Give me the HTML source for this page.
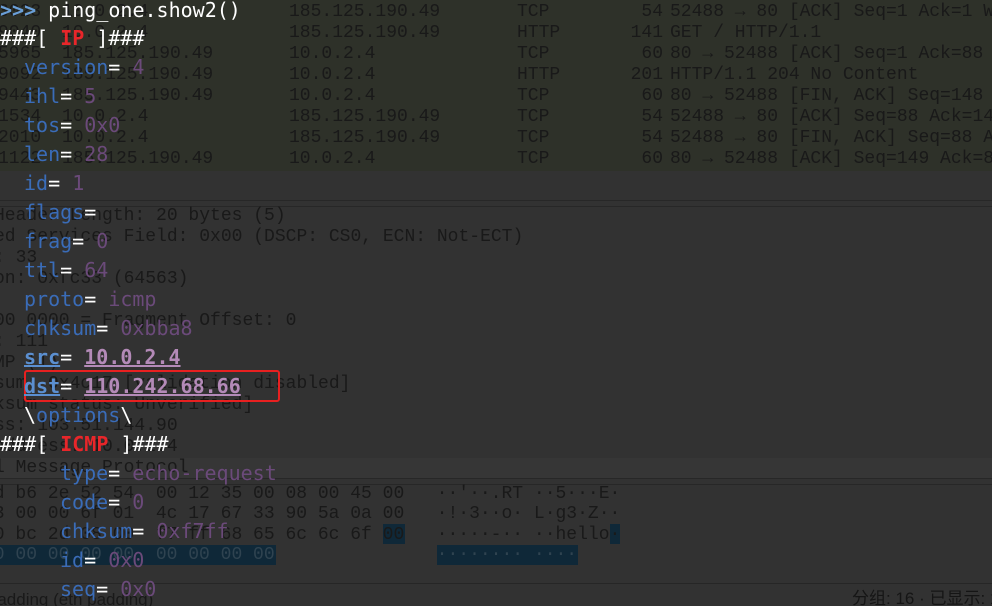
<!DOCTYPE html>
<html><head><meta charset="utf-8"><style>
html,body{margin:0;padding:0;width:992px;height:606px;overflow:hidden;background:#323232;position:relative}
.w{position:absolute;white-space:pre;font-family:"Liberation Mono",monospace;font-size:18px;color:#191919;line-height:21px}
.h{position:absolute;white-space:pre;font-family:"Liberation Mono",monospace;font-size:18px;color:#191919;line-height:20.3px}
.t{position:absolute;white-space:pre;font-family:"DejaVu Sans Mono",monospace;font-size:20px;line-height:24px;color:#fff}
.k{color:#3a6cb8}.v{color:#6b4a7a}.r{color:#e8262a;font-weight:bold}
.bk{color:#5b8fd0;font-weight:bold;text-decoration:underline}.bv{color:#b48ab8;font-weight:bold;text-decoration:underline}
</style></head><body>
<div style="position:absolute;left:0;top:0;width:992px;height:171px;background:#2e3129"></div>
<div style="position:absolute;left:0;top:200px;width:992px;height:1px;background:#272727"></div>
<div style="position:absolute;left:0;top:206px;width:992px;height:1px;background:#272727"></div>
<div style="position:absolute;left:0;top:458px;width:992px;height:21px;background:#363636"></div>
<div style="position:absolute;left:0;top:478px;width:992px;height:1px;background:#272727"></div>
<div style="position:absolute;left:0;top:484px;width:992px;height:1px;background:#272727"></div>
<div style="position:absolute;left:0;top:583px;width:992px;height:1px;background:#262626"></div>
<div style="position:absolute;left:0;top:545px;width:276px;height:20px;background:#0f2838"></div>
<div style="position:absolute;left:437px;top:545px;width:141px;height:20px;background:#0f2838"></div>
<div style="position:absolute;left:383px;top:524px;width:22px;height:20px;background:#0f2838"></div>
<div style="position:absolute;left:610px;top:524px;width:10px;height:20px;background:#0f2838"></div>

<div class="w" style="left:-2px;top:2px">3023
9040
5965
9092
9443
1534
2010
1122</div>
<div class="w" style="left:62px;top:2px">10.0.2.4
10.0.2.4
185.125.190.49
185.125.190.49
185.125.190.49
10.0.2.4
10.0.2.4
185.125.190.49</div>
<div class="w" style="left:289px;top:2px">185.125.190.49
185.125.190.49
10.0.2.4
10.0.2.4
10.0.2.4
185.125.190.49
185.125.190.49
10.0.2.4</div>
<div class="w" style="left:517px;top:2px">TCP
HTTP
TCP
HTTP
TCP
TCP
TCP
TCP</div>
<div class="w" style="left:600px;top:2px;width:63px;text-align:right"> 54
141
 60
201
 60
 54
 54
 60</div>
<div class="w" style="left:670px;top:2px">52488 → 80 [ACK] Seq=1 Ack=1 Win
GET / HTTP/1.1
80 → 52488 [ACK] Seq=1 Ack=88 Win
HTTP/1.1 204 No Content
80 → 52488 [FIN, ACK] Seq=148 Ack
52488 → 80 [ACK] Seq=88 Ack=149
52488 → 80 [FIN, ACK] Seq=88 Ack=
80 → 52488 [ACK] Seq=149 Ack=89</div>

<div class="w" style="left:-6px;top:206px">Header Length: 20 bytes (5)
ed Services Field: 0x00 (DSCP: CS0, ECN: Not-ECT)
: 33
on: 0xfc33 (64563)

00 0000 = Fragment Offset: 0
: 111
MP (1)
sum: 0x4c17 [validation disabled]
ksum status: Unverified]
ss: 103.51.144.90
address: 10.0.2.4
l Message Protocol</div>
<div class="h" style="left:-17px;top:484px">0d b6 2e 52 54  00 12 35 00 08 00 45 00   ··'··.RT ··5···E·
13 00 00 6f 01  4c 17 67 33 90 5a 0a 00   ·!·3··o· L·g3·Z··
70 bc 2d 08 00  f7 ff 68 65 6c 6c 6f 00   ·····-·· ··hello·
<span style="color:#2f4350">00 00 00 00 00  00 00 00 00               ········ ····</span></div>
<div class="w" style="left:-14px;top:589px;font-family:'Liberation Sans',sans-serif;font-size:17px">Padding (eth padding)</div>
<div class="w" style="left:852px;top:588px;font-family:'Liberation Sans','Noto Sans CJK SC',sans-serif;font-size:17px;color:#151515">分组: 16 · 已显示: 16</div>

<div style="position:absolute;left:24px;top:370px;width:252px;height:28px;border:2px solid #e82020;border-radius:3px"></div>

<div class="t" style="left:0;top:-2px"><span style="color:#6a9fd8;font-weight:bold">&gt;&gt;&gt;</span> ping_one.show2()</div>
<div class="t" style="left:0;top:26px">###[ <span class="r">IP</span> ]###</div>
<div class="t" style="left:24px;top:55px"><span class="k">version</span>= <span class="v">4</span></div>
<div class="t" style="left:24px;top:84px"><span class="k">ihl</span>= <span class="v">5</span></div>
<div class="t" style="left:24px;top:113px"><span class="k">tos</span>= <span class="v">0x0</span></div>
<div class="t" style="left:24px;top:142px"><span class="k">len</span>= <span class="v">28</span></div>
<div class="t" style="left:24px;top:171px"><span class="k">id</span>= <span class="v">1</span></div>
<div class="t" style="left:24px;top:200px"><span class="k">flags</span>= </div>
<div class="t" style="left:24px;top:229px"><span class="k">frag</span>= <span class="v">0</span></div>
<div class="t" style="left:24px;top:258px"><span class="k">ttl</span>= <span class="v">64</span></div>
<div class="t" style="left:24px;top:287px"><span class="k">proto</span>= <span class="v">icmp</span></div>
<div class="t" style="left:24px;top:316px"><span class="k">chksum</span>= <span class="v">0xbba8</span></div>
<div class="t" style="left:24px;top:345px"><span class="bk">src</span>= <span class="bv">10.0.2.4</span></div>
<div class="t" style="left:24px;top:374px"><span class="bk">dst</span>= <span class="bv">110.242.68.66</span></div>
<div class="t" style="left:24px;top:403px">\<span class="k">options</span>\</div>
<div class="t" style="left:0;top:432px">###[ <span class="r">ICMP</span> ]###</div>
<div class="t" style="left:60px;top:461px"><span class="k">type</span>= <span class="v">echo-request</span></div>
<div class="t" style="left:60px;top:490px"><span class="k">code</span>= <span class="v">0</span></div>
<div class="t" style="left:60px;top:519px"><span class="k">chksum</span>= <span class="v">0xf7ff</span></div>
<div class="t" style="left:60px;top:548px"><span class="k">id</span>= <span class="v">0x0</span></div>
<div class="t" style="left:60px;top:577px"><span class="k">seq</span>= <span class="v">0x0</span></div>
</body></html>
